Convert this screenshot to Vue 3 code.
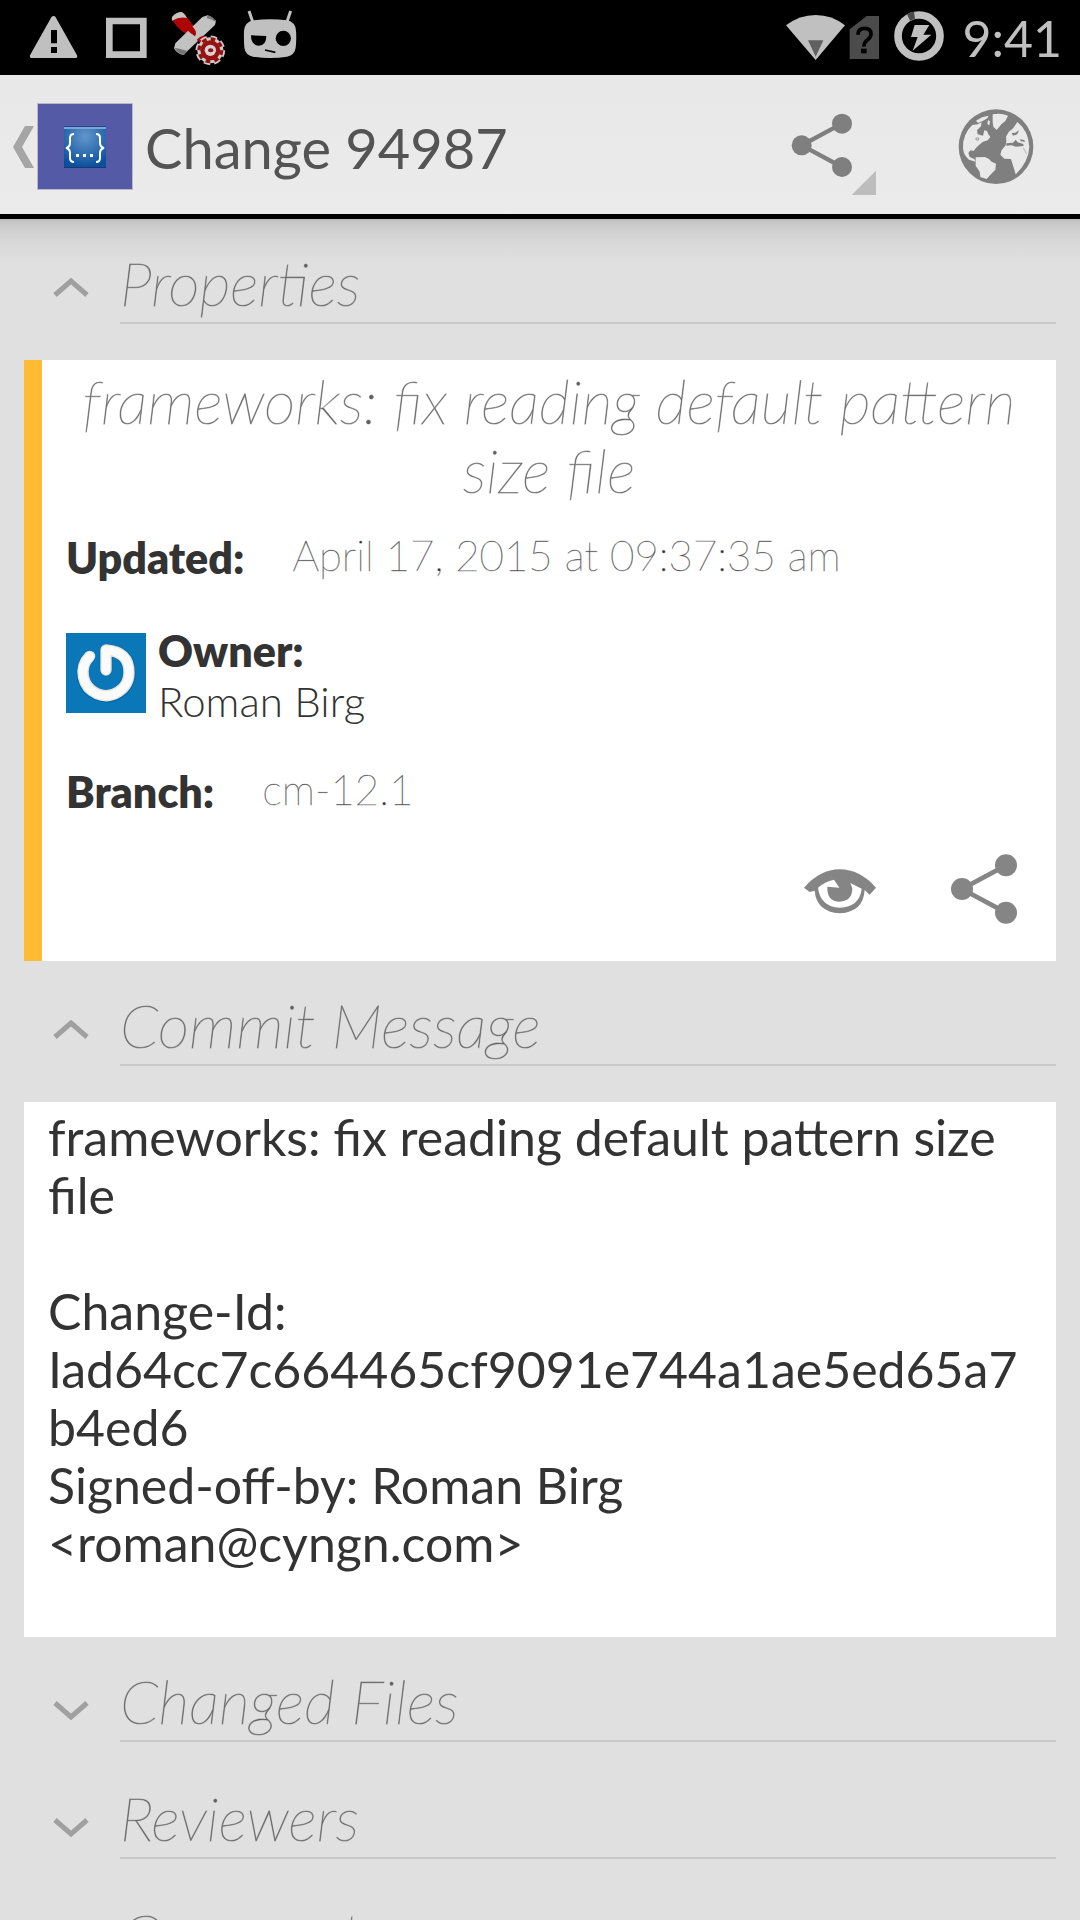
<script setup>
import { reactive } from 'vue'

const open = reactive({ properties: true, message: true, files: false, reviewers: false, comments: false })

const commitMessage = `frameworks: fix reading default pattern size file

Change-Id: Iad64cc7c664465cf9091e744a1ae5ed65a7b4ed6
Signed-off-by: Roman Birg <roman@cyngn.com>

`

const collapsed = [
  { key: 'files', title: 'Changed Files' },
  { key: 'reviewers', title: 'Reviewers' },
  { key: 'comments', title: 'Comments' },
]
</script>

<template>
  <div class="screen">
    <div class="status">
      <div class="status-group">
        <svg width="72" height="75" viewBox="54 0 216 225" aria-hidden="true">
          <path d="M161 48q4 0 6 4l64 114q3 8-4 8H94q-6 0-4-8l64-114q3-4 7-4z" fill="#c0c0c0" />
          <path d="M153 90h18v40h-18zM153 141h18v18h-18z" fill="#000" />
        </svg>
        <svg width="72" height="75" viewBox="270 0 216 225" aria-hidden="true">
          <path d="M328 63h102v101H328z" fill="none" stroke="#c0c0c0" stroke-width="20" />
        </svg>
        <svg width="72" height="75" viewBox="486 0 216 225" aria-hidden="true">
          <path d="M514 56q12-19 31-20l8 6 38 48-8 22q-42-11-69-56z" fill="#ad0505" />
          <path d="M516 51q12-15 29-15 8 3 16 18-22-5-45 8z" fill="#c4c4c4" />
          <path d="M623 46l25 16-3 13-82 77-12 13q-20-3-29-20l4-15 81-79z" fill="#c2c2c2" />
          <path d="M623 46q18 3 25 20-10-7-28-12zM524 144q10 0 39 9l-12 12q-18-4-27-21z" fill="#777" />
          <path d="M573 76q22 18 12 33-14-9-24-20z" fill="#ad0505" />
          <path d="M590 120q14-15 27-12l-17 20z" fill="#ad0505" />
          <circle cx="631" cy="151" r="39" fill="#cbcbcb" stroke="#cbcbcb" stroke-width="11" stroke-dasharray="19 11.6" />
          <circle cx="631" cy="151" r="30" fill="#981010" />
          <circle cx="631" cy="151" r="34" fill="none" stroke="#981010" stroke-width="10" stroke-dasharray="14 12.7" />
          <circle cx="631" cy="151" r="17" fill="#d4d4d4" />
          <ellipse cx="632" cy="151" rx="8" ry="6" fill="#981010" />
        </svg>
        <svg width="72" height="75" viewBox="702 0 216 225" aria-hidden="true">
          <path d="M747 33l12 35M872 33l-12 35" stroke="#c0c0c0" stroke-width="9" fill="none" />
          <path d="M760 61q50-6 101 0 25 5 27 31 2 25-1 51-3 22-26 27-50 8-102 0-23-5-26-27-2-26-1-51 3-26 28-31z" fill="#c0c0c0" />
          <path d="M753 106l46 2q0 29-23 29-23-2-23-31z" fill="#000" />
          <circle cx="850" cy="115" r="23" fill="#000" />
          <path d="M795 150l31 7" stroke="#000" stroke-width="5" />
        </svg>
      </div>
      <div class="status-group">
        <svg width="66" height="75" viewBox="60 0 198 225" aria-hidden="true">
          <path d="M78 76q40-31 89-31t88 31l-88 104z" fill="#c0c0c0" />
          <path d="M144 121h46l-23 49z" fill="#606060" />
        </svg>
        <svg width="42" height="75" viewBox="258 0 126 225" aria-hidden="true">
          <path d="M320 48h37v129h-88V88z" fill="#4b4b4b" />
          <path d="M294 104q0-19 20-19 19 0 19 17 0 10-11 18t-10 20" fill="none" stroke="#000" stroke-width="11" />
          <path d="M303 146h17v14h-17z" fill="#000" />
        </svg>
        <svg width="60" height="75" viewBox="384 0 180 225" aria-hidden="true">
          <circle cx="477" cy="108" r="63" fill="none" stroke="#c0c0c0" stroke-width="23" />
          <path d="M441 43q10-6 21-8l3 21-15 6z" fill="#4b4b4b" />
          <path d="M464 75h44l-18 29h24l-56 48 15-41h-20z" fill="#c0c0c0" />
        </svg>
        <time class="clock">9:41</time>
      </div>
    </div>

    <header class="bar">
      <button class="up" type="button" aria-label="Navigate up">
        <svg width="138" height="139" viewBox="0 75 138 139" aria-hidden="true">
          <defs>
            <radialGradient id="tile" cx="0.5" cy="0.25" r="0.75">
              <stop offset="0" stop-color="#6296cb" />
              <stop offset="1" stop-color="#0a4f9d" />
            </radialGradient>
          </defs>
          <path d="M25 126h9l-12 21 12 21h-9l-12-21z" fill="#a5a5a5" />
          <path d="M37 103h96v87H37z" fill="#b9bac8" />
          <path d="M38 104h94v85H38z" fill="#555aa6" />
          <path d="M64 126h42v42H64z" fill="url(#tile)" />
          <path d="M64 126h42v1H64z" fill="#2c4590" />
          <path d="M64 127h42v2H64z" fill="#79a8d2" />
          <path d="M64 167h42v1H64z" fill="#16396f" />
          <path d="M74 134q-4 0-4 4v5q0 4-4 5 4 1 4 5v5q0 4 4 4M96 134q4 0 4 4v5q0 4 4 5-4 1-4 5v5q0 4-4 4" fill="none" stroke="#fff" stroke-width="2" />
          <path d="M76 154h3v3h-3zM83 154h3v3h-3zM90 154h3v3h-3z" fill="#fff" />
        </svg>
      </button>
      <h1 class="bar-title">Change 94987</h1>
      <button class="action" type="button" aria-label="Share">
        <svg width="100" height="139" viewBox="60 -15 300 417" aria-hidden="true">
          <path d="M246 131L125 196l121 65" fill="none" stroke="#7f7f7f" stroke-width="13" />
          <g fill="#7f7f7f">
            <circle cx="246" cy="131" r="30" /><circle cx="125" cy="196" r="30" /><circle cx="246" cy="261" r="30" />
          </g>
          <path d="M348 272v73h-73z" fill="#bdbdbd" />
        </svg>
      </button>
      <button class="action globe" type="button" aria-label="Open in browser">
        <svg width="96" height="139" viewBox="564 -15 288 417" aria-hidden="true">
          <circle cx="708" cy="200" r="112" fill="#7f7f7f" />
          <g fill="#e9e9e9">
            <path d="M609 205q-2-42 28-70l16-2 12-6-2 12-12 12 2 12 16 4 4-16 8 2 4 10 6 8-8 10-14 4-12 10-10 10-6 8-10-2-6 8 4 12 14 6 4 8-20-6q-16-12-18-34z" />
            <path d="M648 122l18-10 20-5-4 8-14 8-14 6zM684 120l6 4-2 12-6-4z" />
            <path d="M698 103q24-5 46 4l-8 16-12 10-14 17-10-10-2-14z" />
            <path d="M647 232l28-1 12 6 8 8 13 6-2 18-12 12-14 16-19-6-2-16-12-18z" />
            <path d="M772 126q34 27 36 75-2 45-41 82l-14-46-20-1-12-12 4-14 12-14 2-12-1-14 8-14 14-12z" />
          </g>
          <g fill="#7f7f7f">
            <path d="M755 158l9 1 13-8-5 12-13 4zM739 190l20-2 8-9 6 8 17 5 1 6-24 2-12-4-16 1zM780 178l12 2 4 5-14-1z" />
          </g>
          <path d="M648 174h8v6h-8z" fill="none" stroke="#7f7f7f" stroke-width="2" />
          <path d="M790 204l10 18" stroke="#9a9a9a" stroke-width="2" />
        </svg>
      </button>
    </header>

    <main class="content">
      <section>
        <h2 class="heading">
          <button class="toggle" type="button" :aria-expanded="open.properties" @click="open.properties = !open.properties">
            <svg class="chevron" :class="{ down: !open.properties }" width="36" height="24" viewBox="0 0 36 24" aria-hidden="true">
              <path d="M2 17L18 3l16 14" />
            </svg>
            <span class="heading-text thin">Properties</span>
          </button>
        </h2>
        <article v-if="open.properties" class="card props">
          <h3 class="subject thin">frameworks: fix reading default pattern size file</h3>
          <dl class="pair updated">
            <dt class="label">Updated:</dt>
            <dd class="value">April 17, 2015 at 09:37:35 am</dd>
          </dl>
          <div class="owner">
            <svg width="80" height="80" viewBox="78 99 240 240" role="img" aria-label="Avatar">
              <path d="M78 99h240v240H78z" fill="#0a77b8" />
              <g fill="none" stroke-linecap="round" stroke-linejoin="round">
                <path d="M198 211v-61q70 5 70 69a70 70 0 1 1-120-49" stroke="#055b92" stroke-opacity="0.4" stroke-width="38" />
                <path d="M198 210v-60q70 5 69 69a69 69 0 1 1-118-50" stroke="#e4e4e1" stroke-width="34" />
                <path d="M198 210v-60q70 5 69 69a69 69 0 1 1-118-50" stroke="#fbfbfa" stroke-width="26" />
              </g>
            </svg>
            <dl class="owner-text">
              <dt class="label">Owner:</dt>
              <dd class="name">Roman Birg</dd>
            </dl>
          </div>
          <dl class="pair">
            <dt class="label">Branch:</dt>
            <dd class="value">cm-12.1</dd>
          </dl>
          <div class="card-actions">
            <button class="icon-button" type="button" aria-label="View">
              <svg width="96" height="96" viewBox="96 66 288 288" aria-hidden="true">
                <path d="M132 206q49-55 107-55 60 0 109 55l-19 21-15-14q-4 66-74 70-71-5-76-68l-15 4z" fill="#858585" />
                <path d="M174 206q20-18 48-24l16 24-36-3q-2 44 37 45 38-1 38-40l-6-16 34 17q-6 54-66 57-58-3-65-60z" fill="#fff" />
              </svg>
            </button>
            <button class="icon-button" type="button" aria-label="Share">
              <svg width="96" height="96" viewBox="528 66 288 288" aria-hidden="true">
                <path d="M738 139l-132 71 132 71" fill="none" stroke="#858585" stroke-width="14" />
                <g fill="#858585">
                  <circle cx="738" cy="139" r="33" /><circle cx="606" cy="210" r="33" /><circle cx="738" cy="281" r="33" />
                </g>
              </svg>
            </button>
          </div>
        </article>
      </section>

      <section>
        <h2 class="heading">
          <button class="toggle" type="button" :aria-expanded="open.message" @click="open.message = !open.message">
            <svg class="chevron" :class="{ down: !open.message }" width="36" height="24" viewBox="0 0 36 24" aria-hidden="true">
              <path d="M2 17L18 3l16 14" />
            </svg>
            <span class="heading-text thin">Commit Message</span>
          </button>
        </h2>
        <article v-if="open.message" class="card message">{{ commitMessage }}</article>
      </section>

      <section v-for="s in collapsed" :key="s.key" class="closed">
        <h2 class="heading">
          <button class="toggle" type="button" :aria-expanded="open[s.key]" @click="open[s.key] = !open[s.key]">
            <svg class="chevron" :class="{ down: !open[s.key] }" width="36" height="24" viewBox="0 0 36 24" aria-hidden="true">
              <path d="M2 17L18 3l16 14" />
            </svg>
            <span class="heading-text thin">{{ s.title }}</span>
          </button>
        </h2>
      </section>
    </main>
  </div>
</template>

<style>
body {
  margin: 0;
  background: #e0e0e0;
}
</style>

<style scoped>
.screen {
  display: flex;
  flex-direction: column;
  height: 100vh;
  overflow: hidden;
  background: #e0e0e0;
  color: #333;
  font-family: Lato, "Open Sans", sans-serif;
}
svg { display: block; flex: none; }
button {
  margin: 0;
  padding: 0;
  border: 0;
  background: none;
  color: inherit;
  font: inherit;
  text-align: left;
}
h1, h2, h3, dl, dd { margin: 0; }

.status {
  flex: none;
  display: flex;
  justify-content: space-between;
  height: 75px;
  padding: 0 18px;
  background: #000;
}
.status-group { display: flex; }
.clock {
  margin-left: 14px;
  color: #c0c0c0;
  font-size: 50px;
  line-height: 76px;
}

.bar {
  flex: none;
  display: flex;
  align-items: center;
  padding-right: 36px;
  border-bottom: 5px solid #000;
  background: linear-gradient(#e8e8e8, #ebebeb);
}
.bar-title {
  flex: 1;
  margin-left: 7px;
  padding-top: 6px;
  color: #545454;
  font-size: 56px;
  font-weight: 400;
  line-height: 64px;
}
.globe { margin-left: 68px; }

.content {
  flex: 1;
  min-height: 0;
  overflow: hidden;
  padding: 0 24px;
  background: linear-gradient(#bababa, #c8c8c8 4px, #d4d4d4 16px, #dadada 28px, #e0e0e0 44px);
}
.thin {
  color: #606060;
  font-size: 61px;
  font-style: italic;
  font-weight: 100;
  -webkit-text-stroke: 1px rgba(96, 96, 96, 0.5);
}
.heading { font: inherit; }
.toggle {
  display: flex;
  align-items: center;
  width: 100%;
  height: 105px;
}
.chevron { margin: 36px 31px 0 29px; }
.chevron path { fill: none; stroke: #a0a0a0; stroke-width: 5; }
.chevron.down { transform: scaleY(-1); }
.heading-text {
  flex: 1;
  box-sizing: border-box;
  height: 105px;
  padding-top: 29px;
  border-bottom: 2px solid #c8c8c8;
  line-height: 70px;
}
.closed { margin-bottom: 12px; }

.card {
  margin-top: 36px;
  background: #fff;
}
.props {
  padding: 6px 24px 24px;
  border-left: 18px solid #ffbb33;
}
.subject {
  line-height: 69px;
  text-align: center;
}
.pair {
  display: flex;
  align-items: flex-start;
  gap: 48px;
}
.updated { margin-top: 29px; }
.label {
  font-size: 43px;
  font-weight: 800;
  line-height: 50px;
}
.value {
  font-size: 42px;
  font-weight: 100;
  line-height: 44px;
  -webkit-text-stroke: 1px rgba(51, 51, 51, 0.3);
}
.owner {
  display: flex;
  align-items: center;
  gap: 12px;
  margin: 37px 0 41px;
}
.owner-text { padding-top: 6px; }
.name {
  font-size: 42px;
  font-weight: 300;
  line-height: 50px;
}
.card-actions {
  display: flex;
  justify-content: flex-end;
  gap: 48px;
  margin-top: 24px;
}
.message {
  padding: 6px 24px 7px;
  font-size: 50px;
  line-height: 58px;
  white-space: pre-wrap;
  overflow-wrap: anywhere;
}
</style>
